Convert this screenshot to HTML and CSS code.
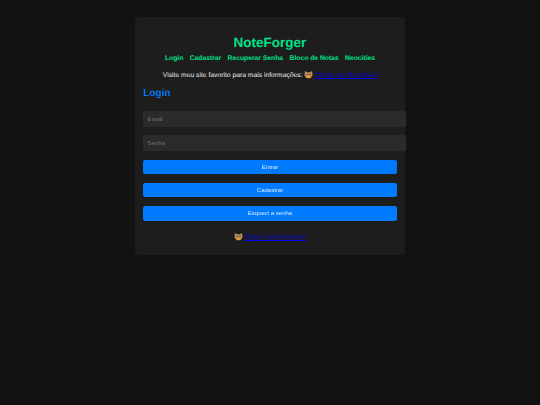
FILE: index.html
```html
<!DOCTYPE html>
<html lang="pt-BR">
<head>
<meta charset="utf-8">
<title>NoteForger</title>
<link rel="stylesheet" href="styles.css">
</head>
<body>
<main class="card">
  <header class="head">
    <h1 class="title">NoteForger</h1>
    <nav class="nav">
      <a href="#">Login</a>
      <a href="#">Cadastrar</a>
      <a href="#">Recuperar Senha</a>
      <a href="#">Bloco de Notas</a>
      <a href="#">Neocities</a>
    </nav>
    <p class="visit">Visite meu site favorito para mais informações:
      <svg class="cat" viewBox="0 0 10 10" aria-hidden="true"><path d="M1 1l2.500 1.500h3L9 1l.5 5L7 9.300H3L.5 6z" fill="#b98a5a"/><path d="M2 6.500h6L6.500 9h-3z" fill="#e89a3c"/><circle cx="3.500" cy="4.800" r=".7" fill="#333"/><circle cx="6.500" cy="4.800" r=".7" fill="#333"/></svg>
      <a class="link" href="#">Check out Neocities!</a></p>
  </header>
  <h2 class="sub">Login</h2>
  <form class="form">
    <input class="input" type="text" placeholder="Email">
    <input class="input input-last" type="password" placeholder="Senha">
    <button class="btn" type="button">Entrar</button>
    <button class="btn" type="button">Cadastrar</button>
    <button class="btn" type="button">Esqueci a senha</button>
  </form>
  <p class="foot">
    <svg class="cat" viewBox="0 0 10 10" aria-hidden="true"><path d="M1 1l2.500 1.500h3L9 1l.5 5L7 9.300H3L.5 6z" fill="#b98a5a"/><path d="M2 6.500h6L6.500 9h-3z" fill="#e89a3c"/><circle cx="3.500" cy="4.800" r=".7" fill="#333"/><circle cx="6.500" cy="4.800" r=".7" fill="#333"/></svg>
    <a class="link" href="#">Check out Neocities!</a></p>
</main>
</body>
</html>
```
FILE: styles.css
```css
* { box-sizing: border-box; }
html, body { margin: 0; height: 405px; overflow: hidden; }
body {
  background: #121212;
  font-family: "Liberation Sans", Arial, sans-serif;
  color: #e0e0e0;
  padding-top: 17px;
  text-rendering: geometricPrecision;
}
.card {
  width: 270px;
  height: 238px;
  margin: 0 auto;
  padding: 8px;
  background: #1e1e1e;
  border-radius: 4px;
  opacity: 0.999;
  filter: blur(0.3px);
}
.head { text-align: center; padding-top: 8px; }
.title {
  margin: 0;
  font-size: 13.500px;
  line-height: 19px;
  font-weight: 700;
  color: #00e68a;
}
.nav {
  display: flex;
  justify-content: center;
  gap: 6.400px;
  margin-top: 3px;
  font-size: 6.750px;
  line-height: 8px;
  font-weight: 700;
}
.nav a { color: #00e68a; text-decoration: none; }
.visit {
  margin: 7px 0 0;
  font-size: 6.750px;
  line-height: 10px;
  color: #f0f0f0;
}
.cat {
  width: 9px;
  height: 9px;
  vertical-align: -2px;
}
.link { color: #0000ee; text-decoration: underline; }
.sub {
  margin: 6px 0 0;
  font-size: 10.100px;
  line-height: 13px;
  font-weight: 700;
  color: #007bff;
}
.form { display: flex; flex-direction: column; margin-top: 11px; }
.input {
  width: 263px;
  height: 16px;
  margin-bottom: 8px;
  padding: 0 4.500px;
  background: #2c2c2c;
  border: 0;
  border-radius: 2px;
  font: 6px "Liberation Sans", Arial, sans-serif;
  color: #e0e0e0;
}
.input-last { margin-bottom: 8.500px; }
.input::placeholder { color: #757575; }
.btn {
  width: 254px;
  height: 14.600px;
  margin-bottom: 8.700px;
  padding: 0;
  background: #007bff;
  border: 0;
  border-radius: 2px;
  font: 6px "Liberation Sans", Arial, sans-serif;
  color: #d8eaff;
}
.foot {
  margin: 3px 0 0;
  text-align: center;
  font-size: 6.750px;
  line-height: 10px;
}
```
